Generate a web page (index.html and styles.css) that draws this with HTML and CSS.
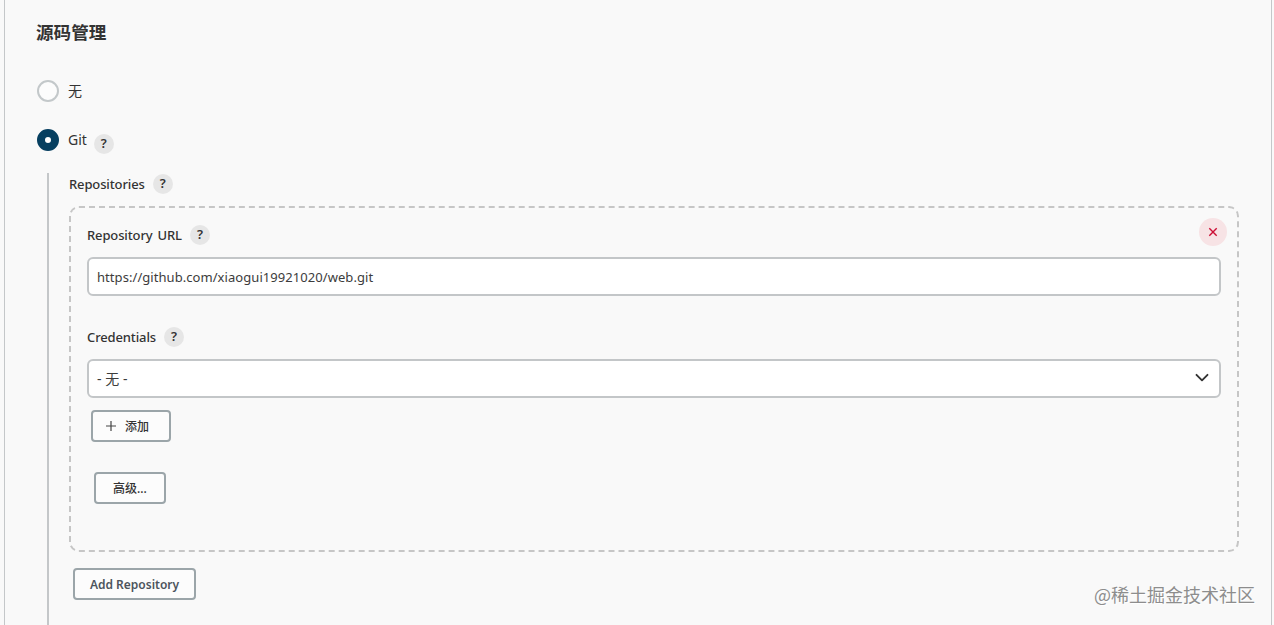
FILE: index.html
```html
<!DOCTYPE html>
<html lang="zh-CN">
<head>
    <meta charset="UTF-8">
    <meta name="viewport" content="width=device-width, initial-scale=1.0">
    <title>源码管理</title>
    <link rel="stylesheet" href="styles.css">
</head>
<body>
    <div class="panel">
        <h1 class="section-title">源码管理</h1>

        <div class="radio-row">
            <span class="radio"></span>
            <span class="radio-label">无</span>
        </div>

        <div class="radio-row radio-row-git">
            <span class="radio checked"></span>
            <span class="radio-label">Git</span>
            <span class="help help-low">?</span>
        </div>

        <div class="nested">
            <div class="label-row">
                <span class="label">Repositories</span>
                <span class="help">?</span>
            </div>

            <div class="repo-box">
                <div class="label-row">
                    <span class="label">Repository URL</span>
                    <span class="help">?</span>
                    <span class="delete">
                        <svg width="10" height="10" viewBox="0 0 10 10"><path d="M1.3 1.3L8.7 8.7M8.7 1.3L1.3 8.7" fill="none" stroke="#cc0f35" stroke-width="1.4"/></svg>
                    </span>
                </div>
                <input class="field" type="text" value="https://github.com/xiaogui19921020/web.git">

                <div class="label-row label-row-credentials">
                    <span class="label">Credentials</span>
                    <span class="help">?</span>
                </div>
                <div class="field select">
                    <span>- 无 -</span>
                    <svg width="14" height="10" viewBox="0 0 14 10"><path d="M1.5 1.8L7 7.3L12.5 1.8" fill="none" stroke="#333" stroke-width="1.9" stroke-linecap="round" stroke-linejoin="round"/></svg>
                </div>

                <button class="btn btn-add">
                    <svg width="12" height="12" viewBox="0 0 12 12"><path d="M6 1V11M1 6H11" fill="none" stroke="#444" stroke-width="1.2"/></svg>
                    <span>添加</span>
                </button>
                <button class="btn btn-advanced">高级...</button>
            </div>

            <button class="btn btn-repo">Add Repository</button>
        </div>
    </div>
    <div class="watermark">@稀土掘金技术社区</div>
</body>
</html>
```

FILE: styles.css
```css
* {
    box-sizing: border-box;
}

body {
    margin: 0;
    height: 625px;
    overflow: hidden;
    background: #f9f9f9;
    color: #333;
    font-family: "Noto Sans", "Noto Sans CJK SC", sans-serif;
    font-size: 13px;
}

.panel {
    height: 625px;
    margin: 0 2px 0 4px;
    padding: 19px 32px 0 31px;
    border-left: 1px solid #c4c7c9;
    border-right: 1px solid #c4c7c9;
    display: flex;
    flex-direction: column;
}

.section-title {
    margin: 0 0 35px;
    font-size: 17.6px;
    line-height: 26px;
    font-weight: 700;
}

.radio-row {
    display: flex;
    align-items: center;
    height: 22px;
    margin-left: 1px;
}

.radio-row-git {
    margin-top: 27px;
}

.radio {
    width: 22px;
    height: 22px;
    margin-right: 9px;
    border: 2px solid #c3c8ca;
    border-radius: 50%;
    background: #fcfcfc;
}

.radio.checked {
    border: 8px solid #063f60;
    background: #fff;
}

.radio-label {
    padding-bottom: 2px;
    font-size: 14px;
}

.help {
    width: 20px;
    height: 20px;
    margin-left: 8px;
    border-radius: 50%;
    background: #e6e6e6;
    font-size: 13px;
    font-weight: 600;
    line-height: 19px;
    text-align: center;
}

.help-low {
    margin-top: 7px;
    margin-left: 7px;
}

.nested {
    flex: 1;
    margin: 22px 0 0 11px;
    padding-left: 20px;
    border-left: 2px solid #c4c7c9;
}

.label-row {
    display: flex;
    align-items: center;
    height: 22px;
}

.label {
    font-size: 13px;
    font-weight: 500;
    letter-spacing: -0.13px;
    word-spacing: 1.8px;
}

.repo-box {
    height: 346px;
    margin-top: 11px;
    padding: 16px 16px 0;
    border: 2px dashed #c6c6c6;
    border-radius: 10px;
}

.delete {
    display: flex;
    align-items: center;
    justify-content: center;
    width: 28px;
    height: 28px;
    margin: -6px -6px 0 auto;
    border-radius: 50%;
    background: #f7e3e5;
}

.field {
    display: flex;
    align-items: center;
    justify-content: space-between;
    width: 100%;
    height: 39px;
    margin-top: 11px;
    padding: 0 8px;
    border: 2px solid #c3c6c8;
    border-radius: 6px;
    background: #fff;
    color: #3c3c3c;
    font-family: inherit;
    font-size: 13px;
    letter-spacing: 0.06px;
}

.label-row-credentials {
    margin-top: 30px;
}

.select {
    padding: 0 10px 1px 8px;
    font-size: 14px;
}

.btn {
    display: flex;
    align-items: center;
    justify-content: center;
    height: 32px;
    padding: 0;
    border: 2px solid #9ba5a9;
    border-radius: 4px;
    background: #fcfcfc;
    color: #333;
    font-family: inherit;
    font-size: 12px;
    font-weight: 500;
}

.btn-add {
    gap: 8px;
    width: 80px;
    margin: 12px 0 0 4px;
    padding-right: 8px;
}

.btn-advanced {
    width: 72px;
    margin: 30px 0 0 7px;
}

.btn-repo {
    width: 123px;
    margin: 16px 0 0 4px;
    color: #4d545d;
    font-weight: 600;
}

/* sits over the bottom right corner of the page */
.watermark {
    position: absolute;
    right: 19px;
    bottom: 18px;
    color: #8d8d8d;
    font-family: "Noto Sans CJK SC", sans-serif;
    font-size: 18px;
    font-weight: 400;
    line-height: 26px;
    text-shadow: 1px 1px 0 #fff;
}
```
